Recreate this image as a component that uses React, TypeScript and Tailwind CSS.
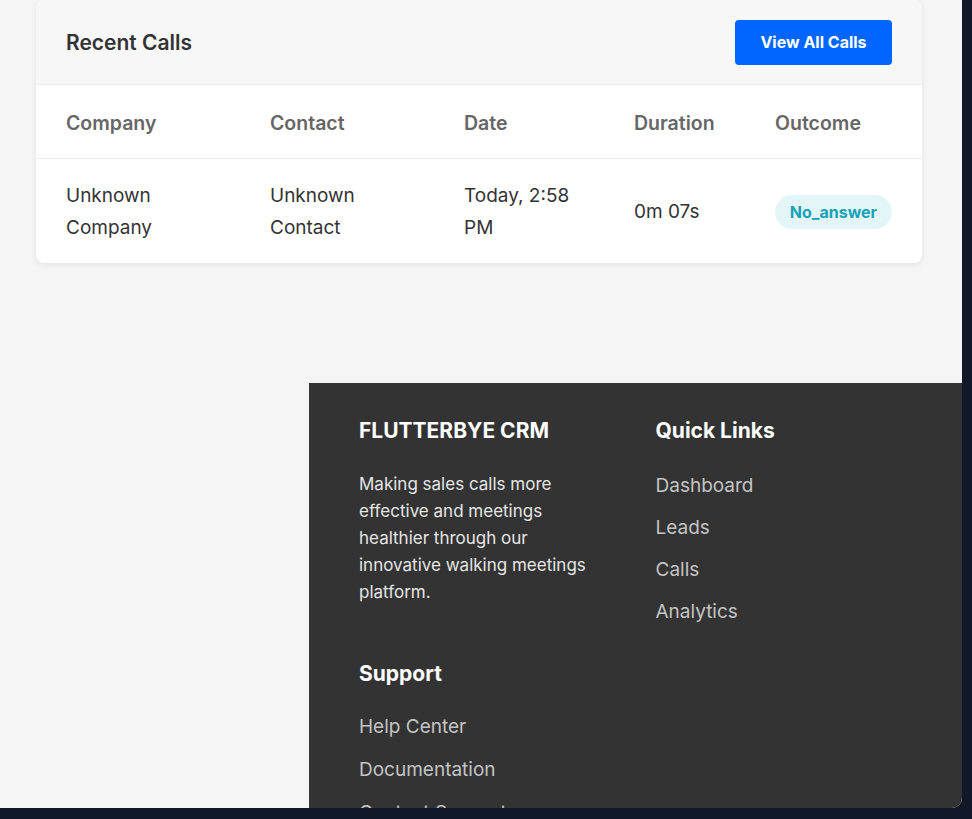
const columns = ["Company", "Contact", "Date", "Duration", "Outcome"];

const quickLinks = ["Dashboard", "Leads", "Calls", "Analytics"];
const supportLinks = ["Help Center", "Documentation", "Contact Support"];

export default function App() {
  return (
    <div className="h-[819px] w-full overflow-hidden bg-[#111827]" style={{ fontFamily: "Inter, 'Noto Sans', sans-serif" }}>
      <div className="h-[808px] w-[962px] overflow-hidden rounded-br-[10px] bg-[#f5f5f5]">
        {/* Recent calls card */}
        <div className="ml-[36px] w-[886px] overflow-hidden rounded-lg bg-white shadow-[0_2px_6px_rgba(0,0,0,0.08)]">
          <div className="flex h-[85px] items-center justify-between border-b border-[#ececec] bg-[#f7f7f7] px-[30px]">
            <h2 className="pt-[2px] text-[21px] font-semibold text-[#333]">Recent Calls</h2>
            <button className="h-[45px] w-[157px] rounded-[4px] bg-[#0066ff] text-[16px] font-bold text-white">
              View All Calls
            </button>
          </div>

          <div className="grid grid-cols-[204px_194px_170px_141px_1fr] border-b border-[#ececec] px-[30px] pt-[22px] pb-[19px] text-[19.5px] leading-[32px] font-semibold text-[#666]">
            {columns.map((c) => (
              <div key={c}>{c}</div>
            ))}
          </div>

          <div className="grid grid-cols-[204px_194px_170px_141px_1fr] items-center px-[30px] pt-[21px] pb-[19px] text-[19px] leading-[32px] text-[#333]">
            <div className="w-[130px]">Unknown Company</div>
            <div className="w-[130px]">Unknown Contact</div>
            <div className="w-[124px]">Today, 2:58 PM</div>
            <div>0m 07s</div>
            <div>
              <span className="inline-flex h-[34px] w-[117px] items-center justify-center rounded-full bg-[#e4f5f8] text-[16px] font-bold text-[#17a2b8]">
                No_answer
              </span>
            </div>
          </div>
        </div>

        {/* Footer */}
        <footer className="mt-[120px] ml-[309px] bg-[#333] px-[50px] pt-[36px] pb-10 text-white">
          <div className="grid grid-cols-2 gap-x-[40px] gap-y-[35px]">
            <div>
              <h3 className="mb-[28px] text-[21px] leading-[24px] font-bold">FLUTTERBYE CRM</h3>
              <p className="w-[240px] text-[17px] leading-[27px] text-[#e6e6e6]">
                Making sales calls more effective and meetings healthier through our innovative walking meetings platform.
              </p>
            </div>
            <div>
              <h3 className="mb-[28px] text-[21px] leading-[24px] font-bold">Quick Links</h3>
              <ul className="flex flex-col gap-[12px]">
                {quickLinks.map((l) => (
                  <li key={l} className="text-[19px] leading-[30px] text-[#c4c4c4]">{l}</li>
                ))}
              </ul>
            </div>
            <div>
              <h3 className="mb-[26px] text-[21px] leading-[24px] font-bold">Support</h3>
              <ul className="flex flex-col gap-[13px]">
                {supportLinks.map((l) => (
                  <li key={l} className="text-[19px] leading-[30px] text-[#c4c4c4]">{l}</li>
                ))}
              </ul>
            </div>
          </div>
        </footer>
      </div>
    </div>
  );
}
